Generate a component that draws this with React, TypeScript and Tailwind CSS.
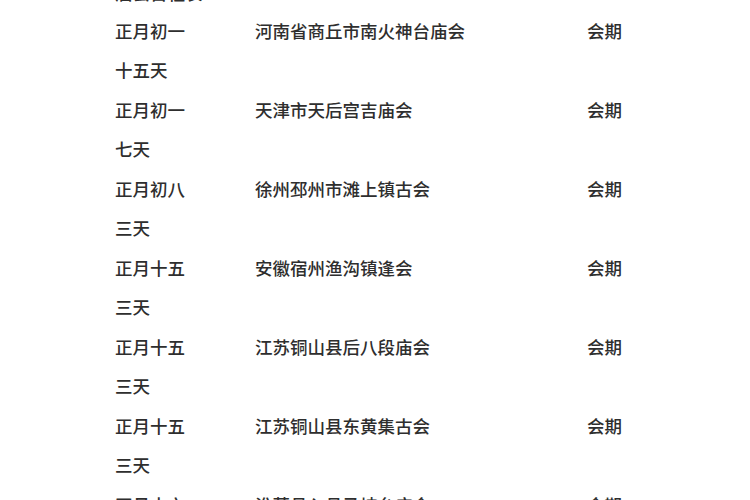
import React from "react";

const rows = [
  { date: "正月初一", place: "河南省商丘市南火神台庙会", days: "十五天" },
  { date: "正月初一", place: "天津市天后宫吉庙会", days: "七天" },
  { date: "正月初八", place: "徐州邳州市滩上镇古会", days: "三天" },
  { date: "正月十五", place: "安徽宿州渔沟镇逢会", days: "三天" },
  { date: "正月十五", place: "江苏铜山县后八段庙会", days: "三天" },
  { date: "正月十五", place: "江苏铜山县东黄集古会", days: "三天" },
  { date: "正月十六", place: "淮萧县入县马坡台庙会", days: "三天" },
];

export default function App() {
  return (
    <div
      className="w-[750px] h-[500px] overflow-hidden bg-white text-[#2e2e2e] text-[17.5px] font-medium"
      style={{ fontFamily: '"Noto Sans CJK SC", "Noto Sans", sans-serif' }}
    >
      <div className="-mt-[25px] pl-[115px] leading-[39.5px]">
        <div className="h-[35.5px] leading-[35.5px]">庙会日程表：</div>
        {rows.map((r, i) => (
          <React.Fragment key={i}>
            <div className="flex h-[39.5px]">
              <div className="w-[140px]">{r.date}</div>
              <div className="w-[332px]">{r.place}</div>
              <div>会期</div>
            </div>
            <div className="h-[39.5px]">{r.days}</div>
          </React.Fragment>
        ))}
      </div>
    </div>
  );
}
